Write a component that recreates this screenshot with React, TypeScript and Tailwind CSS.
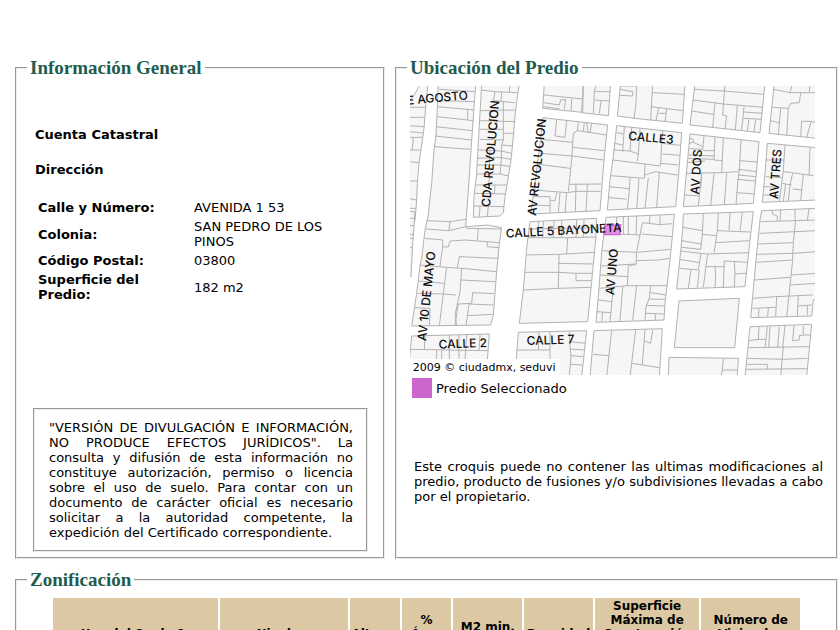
import type { ReactNode } from "react";

const addressRows = [
  { label: "Calle y Número:", value: "AVENIDA 1 53" },
  { label: "Colonia:", value: "SAN PEDRO DE LOS PINOS" },
  { label: "Código Postal:", value: "03800" },
  { label: "Superficie del Predio:", value: "182 m2" },
];

const zoningColumns = [
  { label: "Uso del Suelo 1:", width: "w-[164px]" },
  { label: "Niveles:", width: "w-[127px]" },
  { label: "Altura:", width: "w-[50px]" },
  { label: "%\nÁrea\nLibre", width: "w-[49px]" },
  { label: "M2 min.\nVivienda:", width: "w-[69px]" },
  { label: "Densidad", width: "w-[68px]" },
  {
    label: "Superficie Máxima de Construcción (Sujeta a restricciones)*",
    width: "w-[104px]",
  },
  { label: "Número de Viviendas Permitidas", width: "w-[98px]" },
];

interface MapSheet {
  transform: string;
  blocks: string;
  lots: string;
}

// The street map is drawn at three units per pixel, split in four sheets.
const sheets: MapSheet[] = [
  {
    transform: "translate(-30 -108)",
    blocks:
      "M62 100L40 140L28 152V512H45L50 450L52 400L57 340L62 305L68 265L72 235L78 160L84 100Z M245 100H358L350 155L345 200L340 260L333 330L325 380L315 440L310 488L300 498L220 502L222 440L230 370L235 280L240 190Z M433 100H550L548 187L428 175Z M550 100H632L625 197L545 188Z M428 203L623 225L612 330L600 482L392 492L405 400L420 280Z",
    lots:
      "M28 172H77 M28 202H75 M28 227L72 230 M28 245L70 249 M28 262H68 M28 300H62 M28 335L57 338 M28 393H53 M28 446L50 450 M40 262L37 300 M28 475H48 M243 120L285 125L354 128 M285 125L280 152L345 158 M330 100L328 126 M305 127L303 152 M240 182L345 180 M310 155V270L240 268 M240 212L345 215 M240 238H310 M310 250L341 250 M310 270L305 285L338 288 M235 300L303 303L335 310 M305 285L303 345 M232 325L300 322L333 328 M270 303L268 345 M230 345L303 345L330 350 M303 345L300 372L326 378 M230 372L300 372 M228 405L320 405 M270 372L265 405 M225 430L315 432 M285 405L283 432 M222 468L312 470 M265 468L262 500 M240 468L238 500 M270 182L268 212 M290 212V238 M432 135L549 147 M497 147L493 178 M515 147L513 183 M430 158L478 165L482 150L497 149 M430 170L478 176 M590 100L583 125L580 190 M583 125L630 125 M585 150L627 153 M603 153L598 190 M470 208L465 258L495 262L500 212 M535 215L532 242L520 250L515 330L505 425 M553 218L550 246 M575 220L570 248 M560 217L565 248 M532 242L620 255 M424 268L518 277 M518 292L614 302 M420 310L516 318L612 330 M415 343L510 355 M405 420L500 428L530 424 M528 400L526 485 M508 403L604 402 M562 402L558 485 M528 424L602 424 M400 440L450 440L450 488 M470 428L465 452L452 452 M480 428L475 488 M500 428L495 488 M398 465L448 467",
  },
  {
    transform: "translate(600 -18)",
    blocks:
      "M32 10H225L217 130L75 115L22 108Z M255 10H465L450 158L380 150L240 135Z M493 10H620V175L477 160Z M20 137L215 158L207 270L197 380L-8 390L0 300L10 230Z M240 162L447 185L440 270L430 370L220 380L232 250Z M472 190L620 203V360L457 367L465 280Z",
    lots:
      "M80 10L78 70L72 115 M128 10L122 122 M30 28L68 35L68 48L30 46 M128 38L222 43 M122 80L220 92 M146 83L138 122 M170 87L165 125 M145 100H168 M32 18H80 M252 28L342 33L462 43 M345 10L340 78 M248 60L310 68L340 72L460 82 M315 68L308 142 M245 93L310 103 M340 75L338 105L350 108L345 147 M382 78L376 150 M402 80L398 125L394 152 M402 96L458 100 M400 115L455 118 M417 118L412 153 M437 118L432 155 M490 28L540 38H620 M548 10L540 38 M600 10L598 38 M572 38L568 68L542 70L535 85L530 168 M487 82L535 85 M512 85L505 165 M482 122L507 128 M620 128L600 124H575L572 170 M603 125L590 172 M20 158L40 162 M43 140L38 215 M15 190L38 195 M12 210L60 213L85 222L82 243 M65 143L60 213 M90 147L85 222 M8 240L105 252L103 295L2 287 M105 252L150 258L152 250L205 255 M158 152L155 190L152 252 M155 190L212 196 M157 222L210 226 M105 285L135 275L203 285 M60 293L58 330L52 388 M87 296L80 386 M115 294L105 384 M148 277L140 382 M-3 320L58 326 M-4 353L50 357 M238 175L250 178V187L278 200 M282 168L278 208L238 206 M238 190L250 187 M315 172L312 238L235 235 M278 212L315 212 M235 225L315 228 M340 175L335 278 M312 240L337 242 M232 248L285 243 M228 280L335 278L385 275 M393 180L388 270L383 310L378 375 M388 242L442 246 M385 268L440 275 M385 285L438 290 M383 298L436 303 M380 338L434 342 M275 280L270 330L265 377 M312 280L302 376 M350 278L343 374 M275 282L272 325 M225 345L268 348 M525 195L520 270L515 310L508 365 M600 202L597 285 M468 240H523 M520 275L545 278L610 287 M467 290L515 293 M462 320L508 322 M515 310L545 315 M548 280L540 315L535 363 M580 285L575 330L572 362 M527 312L520 363 M575 330L548 327 M460 345L508 347",
  },
  {
    transform: "translate(-30 387)",
    blocks:
      "M45 -10L38 90L33 185H28V-10Z M115 -400L228 -400L222 -325L218 -265L213 -195L205 -75L197 35L262 30L305 38L298 85L290 170L280 300L272 330L35 333L50 235L60 150L65 130L75 45L84 5L95 -95L102 -195L108 -240L112 -325Z M390 20L590 10L587 75L575 200L563 320L358 325L370 225L380 100Z M355 352L560 347L545 485H345Z M35 363L268 357L262 435H28Z",
    lots:
      "M28 10H45 M28 32H43 M28 57L42 60 M28 70H40 M28 98H38 M118 -377L224 -370 M117 -343L223 -340 M114 -325L222 -315 M112 -295L220 -283 M203 -315V-285 M108 -265L217 -253 M105 -237L215 -225 M103 -205L212 -197 M80 17L150 20L198 13 M150 18L147 45 M78 42L147 47L197 35 M197 35L200 40L303 42 M235 40L232 77 M75 70L128 75V95L145 96L150 78L195 75L298 83 M262 80V95L297 98 M128 95L120 155 M178 125L293 130 M178 125L172 158 M60 150L140 157L185 160L290 170 M185 160L180 230L165 300L170 332 M140 157L130 235L118 333 M55 198L132 205 M182 195L287 200 M52 235L130 237L168 240 M218 233L283 236 M218 233L215 265L175 267L165 330 M207 267L280 270 M207 267L198 332 M203 302L278 298 M42 278L90 280L88 333 M383 68L503 68L587 66 M415 19V68 M430 18L428 68 M462 17L460 68 M485 15V68 M530 14L528 68 M552 13L550 68 M385 42L588 38 M503 68L500 117 M380 120L475 118L583 112 M477 118L475 222 M475 145L580 147 M375 172H475L528 175H577 M528 175V197H575 M370 225L475 220L573 217 M350 405L450 405 M450 350V485 M508 350L510 395L513 425L508 480 M510 402L553 405 M512 422L551 425 M512 448L549 450 M510 380L556 385 M417 351L415 405 M32 403L265 407 M75 362L73 403 M110 405V435 M148 360V435 M177 360V435 M200 359L195 435 M240 358L237 406 M125 404V435",
  },
  {
    transform: "translate(600 402)",
    blocks:
      "M-12 -8L193 -17L187 50L180 120L165 250L162 300L-42 307L-33 205L-25 95Z M207 243L388 235L374 383H193Z M175 470L177 412L385 415L382 470Z M-48 332L157 326L148 470H-60Z M220 -18L430 -25L420 60L405 200L200 207L212 95L218 30Z M455 -28L620 -35V235L610 240L605 288L422 293L440 100L450 0Z M420 320L605 313L590 470H405Z",
    lots:
      "M-18 40L90 45 M40 -10V42 M55 -11V42 M80 -12L78 44 M20 -9V15 M97 8L90 45L80 95L78 133L55 138L52 197H172 M97 8L150 14L187 11 M150 -15V14 M120 -13L118 10 M95 42L187 50 M-25 92L80 97L182 88 M80 122L145 120L180 115 M-28 138L78 132 M-31 165L55 170 M-33 205L52 197 M10 202L0 305 M38 200L30 303 M80 197L68 301 M122 197L118 235L108 258L105 300 M122 218L168 225 M118 237L166 238 M108 256L165 258 M106 280L163 282 M136 282V300 M-35 240L5 245 M-40 275L2 278 M-22 277L-25 305 M5 332L-10 470 M-50 403L-3 407 M77 330L65 430L60 470 M105 330L97 433 M65 430L148 443 M103 363L122 370L128 330 M340 417L337 450L333 470 M337 450H382 M280 -20L277 45L272 88L215 82 M218 22L277 32 M215 62L273 72 M277 43L318 47 M325 -22L322 32L318 60L312 98 M322 32L420 36 M318 68L418 62 M360 -22L357 30 M397 -24L390 32 M212 93L290 102L418 98 M208 118L270 128 M273 100L265 150L208 145 M243 148L235 204 M268 150L262 203 M293 103L287 145L280 202 M287 140H342 M315 140L317 170L315 202 M343 122L340 202 M343 123L412 127 M373 125L375 160L373 200 M375 162L408 160 M452 5L620 0 M487 -30V-18L502 -12V3 M512 -31L510 3 M555 -33V3 M597 -35L592 2 M449 40L620 32 M557 0L550 70L547 130L537 225L530 290 M446 72L550 68 M441 103L550 100L620 95 M439 127L548 120 M545 165L620 160 M435 180L540 172 M542 195L620 190 M430 235L497 230L608 225 M500 230L497 290 M427 265L497 262 M447 267L445 292 M475 263L473 290 M565 227L562 288 M562 258L605 255 M592 256V286 M415 383L597 380 M410 415L520 418L592 415 M520 380L512 470 M410 433H472V448 M408 448L590 446 M447 320L445 360 M472 320L465 383 M480 320L476 383 M508 320L503 382 M525 318L518 382 M417 362L445 358L467 358 M552 318L548 362L568 360V347L580 345V318 M580 345H600",
  },
];

const streets = [
  { name: "E AGOSTO", x: -8, y: 56, angle: -5 },
  { name: "CDA REVOLUCION", x: 240, y: 364, angle: -85 },
  { name: "AV REVOLUCION", x: 378, y: 390, angle: -84 },
  { name: "CALLE3", x: 654, y: 162, angle: 5 },
  { name: "AV DOS", x: 867, y: 326, angle: -86 },
  { name: "AV TRES", x: 1104, y: 340, angle: -86 },
  { name: "CALLE 5 BAYONETA", x: 288, y: 455, angle: -3 },
  { name: "AV UNO", x: 612, y: 628, angle: -85 },
  { name: "AV 10 DE MAYO", x: 48, y: 766, angle: -84 },
  { name: "CALLE 2", x: 86, y: 788, angle: -2 },
  { name: "CALLE 7", x: 350, y: 777, angle: -2 },
];

function LotMap() {
  return (
    <svg
      viewBox="0 0 1215 867"
      className="block h-[289px] w-[405px]"
      role="img"
      aria-label="Croquis de ubicación"
    >
      {sheets.map((sheet) => (
        <g key={sheet.transform} transform={sheet.transform} strokeWidth="3">
          <path d={sheet.blocks} fill="#f6f6f6" stroke="#b2b2b2" />
          <path d={sheet.lots} fill="none" stroke="#b2b2b2" />
        </g>
      ))}
      <path
        d="M583 420L632 416L630 446H583Z"
        fill="#e58fe2"
        stroke="#cc66cc"
        strokeWidth="4"
      />
      <g
        fontFamily='Inter, "Liberation Sans", sans-serif'
        fontSize="36"
        fontWeight="500"
        fill="#111"
      >
        {streets.map((street) => (
          <text
            key={street.name}
            transform={`translate(${street.x} ${street.y}) rotate(${street.angle})`}
          >
            {street.name}
          </text>
        ))}
      </g>
      <path d="M0 819H450V867H0Z" fill="#fff" />
      <text
        x="8"
        y="856"
        fontFamily='"DejaVu Sans", sans-serif'
        fontSize="33"
        fill="#000"
      >
        2009 © ciudadmx, seduvi
      </text>
    </svg>
  );
}

function Section({ title, children }: { title: string; children: ReactNode }) {
  return (
    <fieldset className="min-w-0 border-2 border-[#ececec] px-[10px] [border-style:groove]">
      <legend className="px-[3px] font-['Liberation_Serif',serif] text-[19px] leading-6 font-bold text-[#1f5c50]">
        {title}
      </legend>
      {children}
    </fieldset>
  );
}

export default function App() {
  return (
    <main className="bg-white pt-14 pr-[2px] pl-[15px] font-['DejaVu_Sans',sans-serif] text-[13px] leading-[15px] text-black">
      <div className="grid grid-cols-[370fr_443fr] gap-[10px]">
        <Section title="Información General">
          <div className="pr-[5px] pb-[5px] pl-[6px]">
            <h2 className="mt-[47px] px-[2px] font-bold">Cuenta Catastral</h2>
            <h2 className="mt-5 px-[2px] font-bold">Dirección</h2>
            <table className="mt-5 ml-[2px] w-[314px] table-fixed border-separate border-spacing-[2px]">
              <tbody>
                {addressRows.map((row) => (
                  <tr key={row.label}>
                    <th scope="row" className="p-px pr-8 text-left font-bold">
                      {row.label}
                    </th>
                    <td className="p-px">{row.value}</td>
                  </tr>
                ))}
              </tbody>
            </table>
            <p className="mt-[103px] border-2 border-[#ececec] py-[10px] pr-[13px] pl-[14px] text-justify [border-style:groove]">
              "VERSIÓN DE DIVULGACIÓN E INFORMACIÓN, NO PRODUCE EFECTOS
              JURÍDICOS". La consulta y difusión de esta información no
              constituye autorización, permiso o licencia sobre el uso de
              suelo. Para contar con un documento de carácter oficial es
              necesario solicitar a la autoridad competente, la expedición del
              Certificado correspondiente.
            </p>
          </div>
        </Section>

        <Section title="Ubicación del Predio">
          <div className="pt-[6px] pl-[3px]">
            <LotMap />
            <div className="mt-[3px] flex items-center gap-1 pl-[2px]">
              <span className="size-5 bg-[#cc66cc]" />
              <span>Predio Seleccionado</span>
            </div>
            <p className="mt-[61px] mr-[3px] ml-1 text-justify">
              Este croquis puede no contener las ultimas modificaciones al
              predio, producto de fusiones y/o subdivisiones llevadas a cabo
              por el propietario.
            </p>
          </div>
        </Section>
      </div>

      <div className="mt-[9px]">
        <Section title="Zonificación">
          <table className="mx-auto mt-1 w-[94%] table-fixed border-separate border-spacing-[2px] text-xs leading-[14px]">
            <thead>
              <tr>
                {zoningColumns.map((column) => (
                  <th
                    key={column.label}
                    scope="col"
                    className={`${column.width} bg-[#dcc8a2] p-px font-bold whitespace-pre-line`}
                  >
                    {column.label}
                  </th>
                ))}
              </tr>
            </thead>
          </table>
        </Section>
      </div>
    </main>
  );
}
